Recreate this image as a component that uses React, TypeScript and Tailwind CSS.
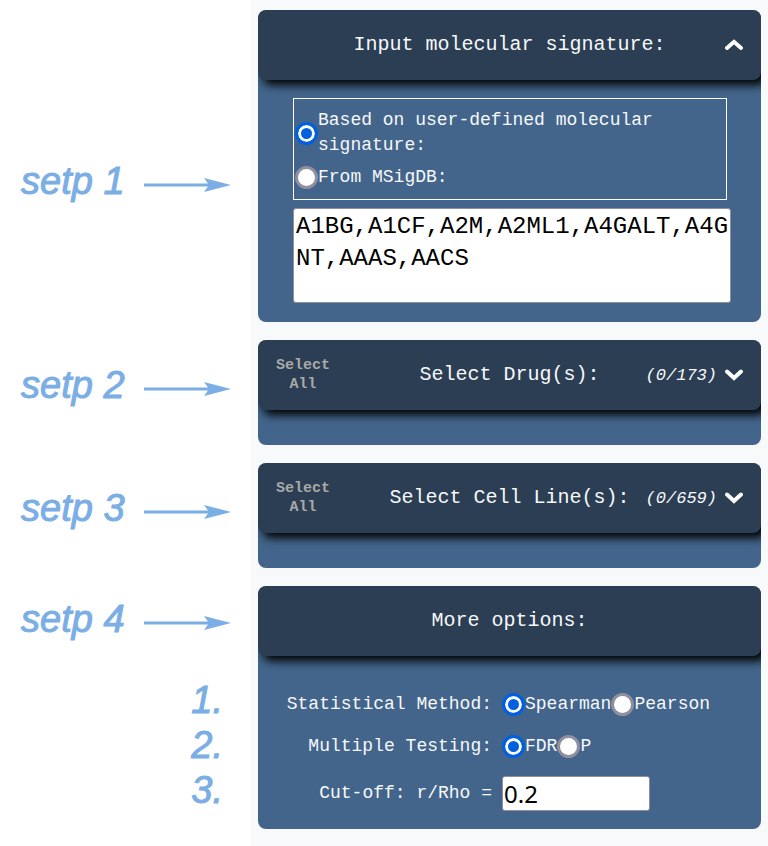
import { useState, type ReactNode } from 'react';

const mono = "font-['Liberation_Mono',monospace]";

function Chevron({ up = false }: { up?: boolean }) {
  return (
    <svg viewBox="0 0 18 12" className="h-3 w-[18px]" fill="none" stroke="#fff" strokeWidth="4" strokeLinecap="round" aria-hidden="true">
      <path d={up ? 'M2 9 9 2.8 16 9' : 'M2 2.5 9 9 16 2.5'} />
    </svg>
  );
}

function Step({ label, className, children }: { label: string; className: string; children?: ReactNode }) {
  return (
    <div className={`w-[251px] shrink-0 pl-[21px] font-['Liberation_Sans',Arial,sans-serif] text-[38px] leading-[45px] text-[#7aaee4] italic [-webkit-text-stroke:1px_#7aaee4] ${className}`}>
      <div className="flex items-center justify-between pr-5">
        <span>{label}</span>
        <svg viewBox="0 0 87 14" className="mt-1.5 h-3.5 w-[87px]" fill="#7aaee4" aria-hidden="true">
          <path d="M0 5.5H64L60 0 87 7 60 14 64 8.5H0Z" />
        </svg>
      </div>
      {children}
    </div>
  );
}

function Card({ title, left, right, children }: { title: string; left?: ReactNode; right?: ReactNode; children?: ReactNode }) {
  return (
    <section className="overflow-hidden rounded-lg bg-[#43658b]">
      <header className="grid h-[70px] grid-cols-[1fr_auto_1fr] items-center rounded-lg bg-[#2b3e53] px-[18px] shadow-[5px_5px_10px_#000]">
        <div className="flex">{left}</div>
        <h2 className="text-xl text-[#f7f8fa]">{title}</h2>
        <div className="flex justify-end">{right}</div>
      </header>
      {children}
    </section>
  );
}

function Row({ step, children }: { step: ReactNode; children: ReactNode }) {
  return (
    <div className="flex">
      {step}
      <div className="min-w-0 flex-1 bg-[#f7f9fb] px-[7px] pb-[18px]">{children}</div>
    </div>
  );
}

function Radio({ name, label, checked, onSelect }: { name: string; label: string; checked: boolean; onSelect: () => void }) {
  return (
    <label className="flex items-center">
      <input
        type="radio"
        name={name}
        checked={checked}
        onChange={onSelect}
        className="size-[23px] shrink-0 appearance-none rounded-full border-3 border-[#8f8f9d] bg-white checked:border-[#0060df] checked:bg-[#0060df] checked:shadow-[inset_0_0_0_3px_#fff]"
      />
      <span>{label}</span>
    </label>
  );
}

function SelectAll() {
  return (
    <button type="button" className="w-[54px] text-center text-[15px] leading-[19px] font-bold text-[#a9a9a9]">
      Select All
    </button>
  );
}

function Count({ text, label }: { text: string; label: string }) {
  return (
    <button type="button" aria-label={label} className="flex items-center gap-2 text-[17px] text-[#f7f8fa] italic">
      <span>{text}</span>
      <Chevron />
    </button>
  );
}

export default function App() {
  const [source, setSource] = useState('user');
  const [genes, setGenes] = useState('A1BG,A1CF,A2M,A2ML1,A4GALT,A4GNT,AAAS,AACS');
  const [method, setMethod] = useState('Spearman');
  const [testing, setTesting] = useState('FDR');
  const [cutoff, setCutoff] = useState('0.2');

  return (
    <main className={`min-h-screen bg-[linear-gradient(to_right,#fff_251px,#f7f9fb_251px)] pt-2.5 text-lg leading-[25px] text-[#f7f8fa] ${mono}`}>
      <Row step={<Step label="setp 1" className="pt-[149px]" />}>
        <Card
          title="Input molecular signature:"
          right={
            <button type="button" aria-label="Collapse">
              <Chevron up />
            </button>
          }
        >
          <div className="pt-[18px] pr-[30px] pb-[19px] pl-[35px]">
            <div role="radiogroup" aria-label="Signature source" className="mr-1 flex flex-col gap-[7px] border border-white py-[9px] pl-px">
              <Radio name="source" label="Based on user-defined molecular signature:" checked={source === 'user'} onSelect={() => setSource('user')} />
              <Radio name="source" label="From MSigDB:" checked={source === 'msigdb'} onSelect={() => setSource('msigdb')} />
            </div>
            <textarea
              aria-label="Gene list"
              value={genes}
              onChange={(e) => setGenes(e.target.value)}
              className="mt-2 block h-[95px] w-full resize-none overflow-hidden rounded-[3px] border border-[#8f8f9d] bg-white pt-0.5 pl-0.5 text-2xl leading-8 break-all text-black"
            />
          </div>
        </Card>
      </Row>

      <Row step={<Step label="setp 2" className="pt-[23px]" />}>
        <Card title="Select Drug(s):" left={<SelectAll />} right={<Count text="(0/173)" label="Expand drugs, 0 of 173 selected" />}>
          <div className="h-[35px]" />
        </Card>
      </Row>

      <Row step={<Step label="setp 3" className="pt-[23px]" />}>
        <Card title="Select Cell Line(s):" left={<SelectAll />} right={<Count text="(0/659)" label="Expand cell lines, 0 of 659 selected" />}>
          <div className="h-[35px]" />
        </Card>
      </Row>

      <Row
        step={
          <Step label="setp 4" className="pt-[11px]">
            <ol className="mt-9 pr-7 text-right">
              <li>1.</li>
              <li>2.</li>
              <li>3.</li>
            </ol>
          </Step>
        }
      >
        <Card title="More options:">
          <div className="grid grid-cols-[234px_1fr] items-center gap-x-[10px] gap-y-[17px] pt-[36px] pb-[18px]">
            <span className="text-right">Statistical Method:</span>
            <div role="radiogroup" aria-label="Statistical Method" className="flex">
              <Radio name="method" label="Spearman" checked={method === 'Spearman'} onSelect={() => setMethod('Spearman')} />
              <Radio name="method" label="Pearson" checked={method === 'Pearson'} onSelect={() => setMethod('Pearson')} />
            </div>
            <span className="text-right">Multiple Testing:</span>
            <div role="radiogroup" aria-label="Multiple Testing" className="flex">
              <Radio name="testing" label="FDR" checked={testing === 'FDR'} onSelect={() => setTesting('FDR')} />
              <Radio name="testing" label="P" checked={testing === 'P'} onSelect={() => setTesting('P')} />
            </div>
            <label htmlFor="cutoff" className="text-right">
              Cut-off: r/Rho =
            </label>
            <input
              id="cutoff"
              value={cutoff}
              onChange={(e) => setCutoff(e.target.value)}
              className="h-[35px] w-[148px] rounded-[3px] border border-[#8f8f9d] bg-white px-px font-['Noto_Sans',sans-serif] text-2xl text-black"
            />
          </div>
        </Card>
      </Row>
    </main>
  );
}
